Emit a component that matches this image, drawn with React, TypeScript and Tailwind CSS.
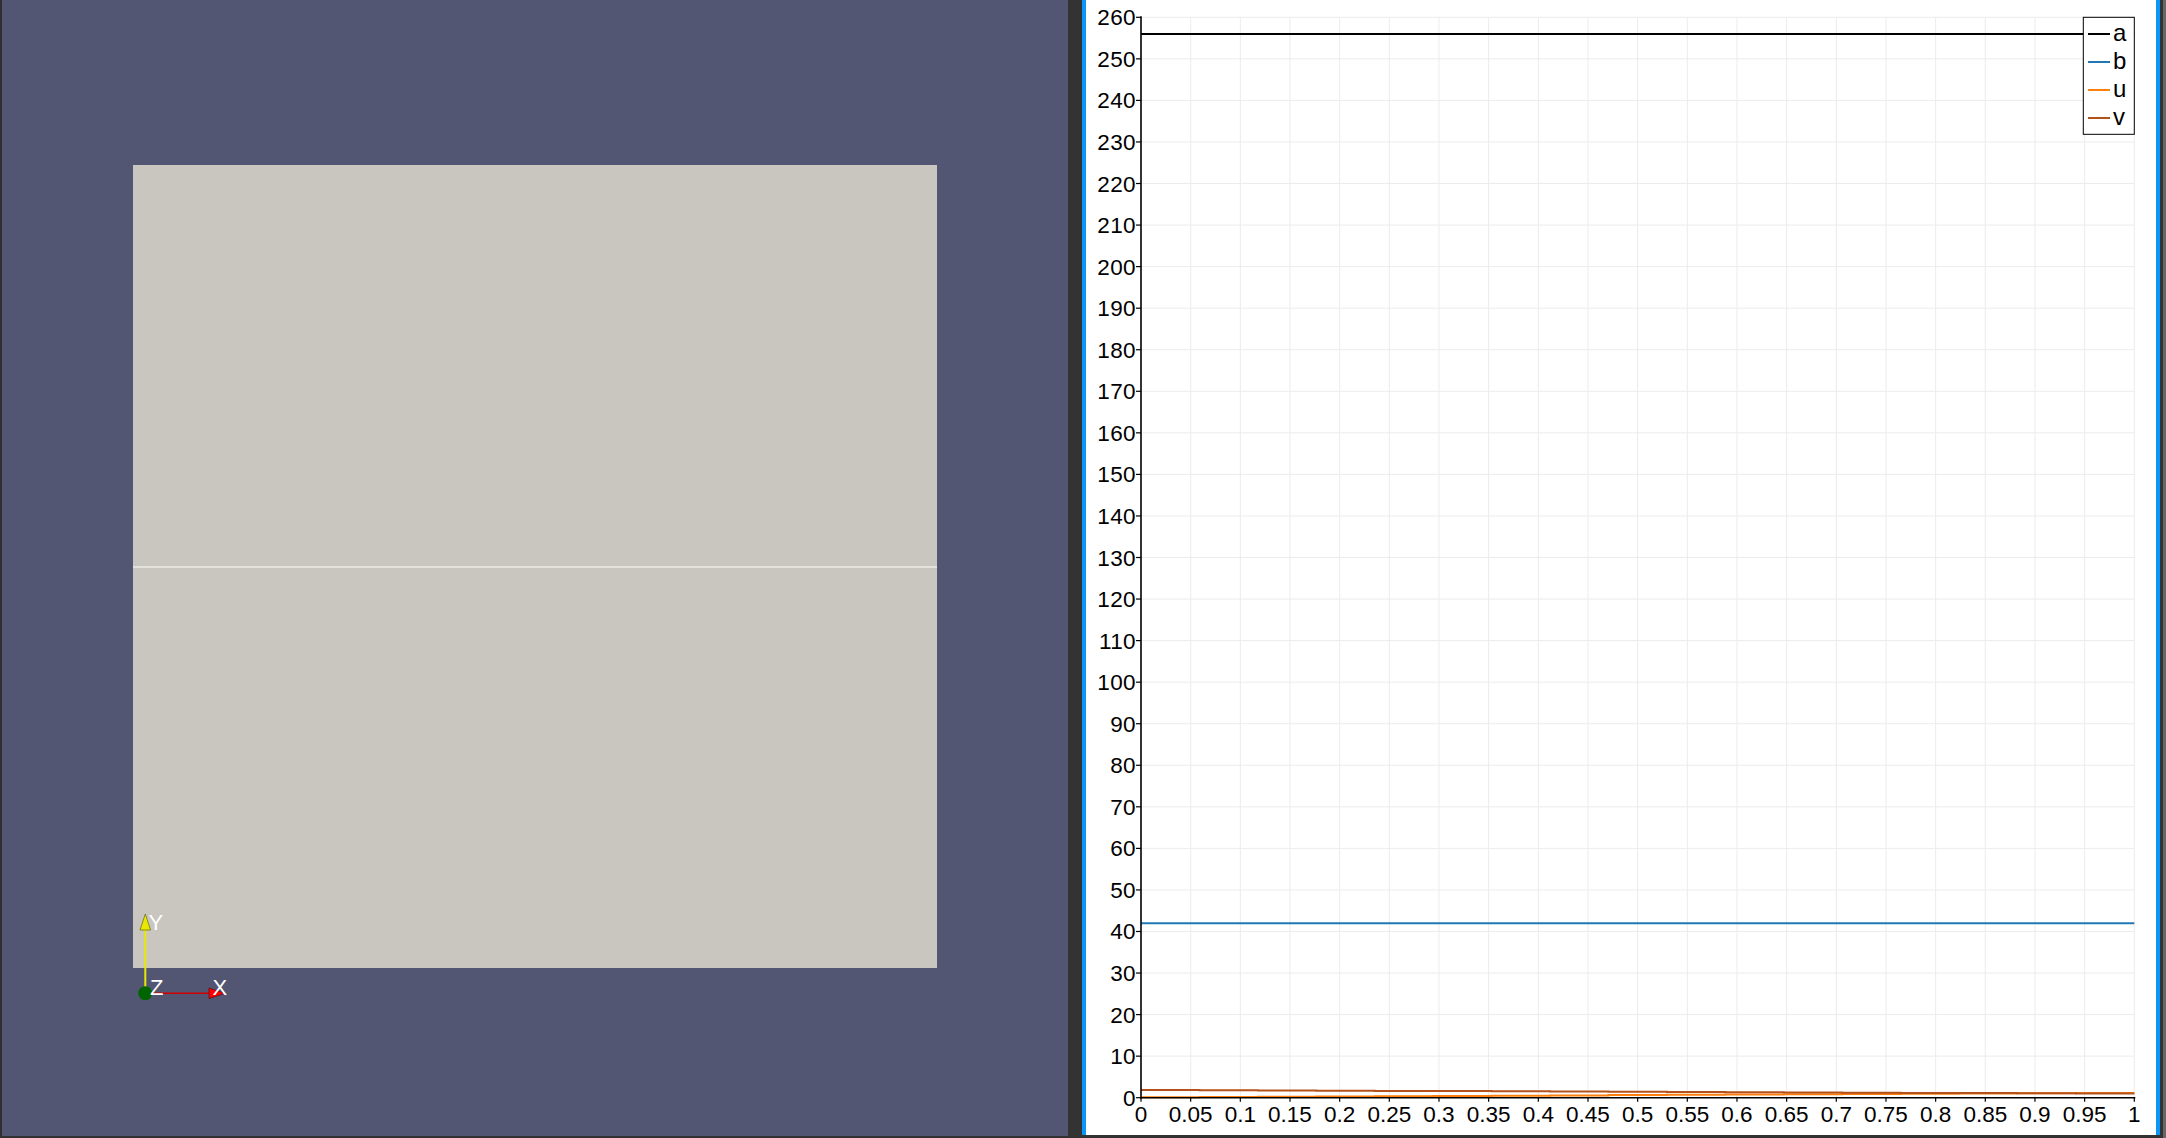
import { useMemo } from 'react'

// plot frame, in the chart svg's own pixels
const X0 = 55
const X1 = 1048.3
const Y0 = 1097.7
const YTOP = 17.3
const YMAX = 260

const sx = (v: number) => X0 + v * (X1 - X0)
const sy = (v: number) => Y0 - (v / YMAX) * (Y0 - YTOP)

const yTicks = Array.from({ length: 27 }, (_, i) => i * 10)
const xTicks = Array.from({ length: 21 }, (_, i) => i * 0.05)

const fmt = (v: number) => String(Number(v.toFixed(2)))

type Series = { name: string; color: string; points: [number, number][] }

const stepped = (from: number, to: number, steps: number): [number, number][] => {
  const pts: [number, number][] = []
  for (let i = 0; i < steps; i++) {
    const v = from + ((to - from) * i) / (steps - 1)
    pts.push([i / steps, v], [(i + 1) / steps, v])
  }
  return pts
}

export default function App() {
  const series: Series[] = useMemo(
    () => [
      { name: 'a', color: '#000000', points: [[0, 256], [1, 256]] },
      { name: 'b', color: '#1f77b4', points: [[0, 42], [1, 42]] },
      { name: 'u', color: '#ff7f0e', points: stepped(0.1, 1.15, 17) },
      { name: 'v', color: '#b5521b', points: stepped(1.85, 1.0, 17) },
    ],
    []
  )

  return (
    <div className="flex h-[1138px] w-[2166px] overflow-hidden bg-[#333333]">
      <RenderView />
      <div className="w-[14px] shrink-0" />
      <div className="flex h-[1135px] w-[1078px] shrink-0 border-x-4 border-[#0b96f7] bg-white">
        <LineChart series={series} />
      </div>
      <div className="h-full w-[3px] shrink-0 bg-[#333333]" />
      <div className="h-full w-[3px] shrink-0 bg-[#666666]" />
    </div>
  )
}

const RenderView = () => {
  return (
    <div className="relative h-[1136px] w-[1068px] shrink-0 border-l-2 border-[#2f2f2f] bg-[#525672] pl-[131px] pt-[165px]">
      <div className="flex h-[803px] w-[804px] flex-col bg-[#c9c5bf]">
        <div className="h-[401px]" />
        <div className="h-[2px] bg-[#e4e2dc]" />
      </div>
      <AxesGizmo />
    </div>
  )
}

const AxesGizmo = () => {
  return (
    <svg
      className="absolute left-[119px] top-[900px] font-['Liberation_Sans',sans-serif]"
      width="130"
      height="110"
      viewBox="120 900 130 110"
    >
      <line x1="144.3" y1="993.3" x2="144.3" y2="928" stroke="#e8e800" strokeWidth="2" />
      <polygon points="144.3,914 139,930 149.6,930" fill="#e8e800" stroke="#555500" strokeWidth="0.6" />
      <line x1="144.3" y1="993.3" x2="209" y2="993.3" stroke="#d00000" strokeWidth="1.5" />
      <polygon points="224,993.3 208,988 208,998.6" fill="#ff0000" stroke="#550000" strokeWidth="0.6" />
      <circle cx="144.3" cy="993.3" r="7" fill="#006400" />
      <text x="147.5" y="929.5" fill="#ffffff" fontSize="22">
        Y
      </text>
      <text x="149" y="994.5" fill="#ffffff" fontSize="22">
        Z
      </text>
      <text x="211.5" y="994.5" fill="#ffffff" fontSize="22">
        X
      </text>
    </svg>
  )
}

const LineChart = ({ series }: { series: Series[] }) => {
  return (
    <svg
      width="1070"
      height="1135"
      className="block font-['Liberation_Sans',sans-serif]"
    >
      {/* grid */}
      {yTicks.slice(1).map((t) => (
        <line key={`gy${t}`} x1={X0} x2={X1} y1={sy(t)} y2={sy(t)} stroke="#ececec" strokeWidth="1" />
      ))}
      {xTicks.slice(1).map((t) => (
        <line key={`gx${t}`} x1={sx(t)} x2={sx(t)} y1={YTOP} y2={Y0} stroke="#ececec" strokeWidth="1" />
      ))}

      {/* data */}
      {series.map((s) => (
        <polyline
          key={s.name}
          points={s.points.map(([x, y]) => `${sx(x)},${sy(y)}`).join(' ')}
          fill="none"
          stroke={s.color}
          strokeWidth="2"
        />
      ))}

      {/* axes */}
      <line x1={X0} x2={X0} y1={YTOP - 1} y2={Y0 + 1} stroke="#000" strokeWidth="1.6" />
      <line x1={X0 - 1} x2={X1 + 1} y1={Y0} y2={Y0} stroke="#000" strokeWidth="1.6" />

      {yTicks.map((t) => (
        <g key={`ty${t}`}>
          <line x1={X0 - 5} x2={X0} y1={sy(t)} y2={sy(t)} stroke="#000" strokeWidth="1.2" />
          <text
            x={X0 - 5}
            y={sy(t) + 8}
            textAnchor="end"
            fontSize="22.5"
            letterSpacing="0.4"
            fill="#000"
          >
            {t}
          </text>
        </g>
      ))}
      {xTicks.map((t) => (
        <g key={`tx${t}`}>
          <line x1={sx(t)} x2={sx(t)} y1={Y0} y2={Y0 + 4} stroke="#000" strokeWidth="1.2" />
          <text x={sx(t)} y={Y0 + 24} textAnchor="middle" fontSize="22.5" fill="#000">
            {fmt(t)}
          </text>
        </g>
      ))}

      {/* legend */}
      <rect x="997.3" y="17.3" width="51" height="117" fill="#fff" stroke="#000" strokeWidth="1" />
      {series.map((s, i) => (
        <g key={`lg${s.name}`}>
          <line x1="1002" x2="1024" y1={34 + i * 28} y2={34 + i * 28} stroke={s.color} strokeWidth="2" />
          <text x="1027" y={41 + i * 28} fontSize="24" fill="#000">
            {s.name}
          </text>
        </g>
      ))}
    </svg>
  )
}
